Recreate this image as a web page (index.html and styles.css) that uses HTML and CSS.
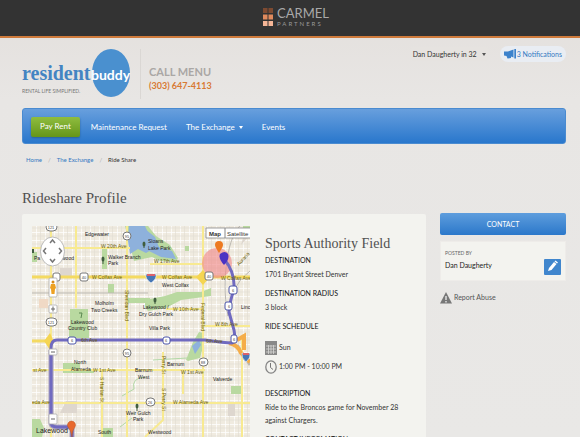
FILE: index.html
```html
<!DOCTYPE html>
<html lang="en">
<head>
<meta charset="utf-8">
<title>Rideshare Profile - residentbuddy</title>
<link rel="stylesheet" href="styles.css">
</head>
<body>
<div class="topbar">
  <svg class="tiles" viewBox="0 0 10 18" aria-hidden="true">
    <path fill="#7d4a31" d="M0 0h4.500v5H0zM5.500 0H10v5H5.500z"/>
    <path fill="#e08a5d" d="M0 6.500h4.500v5H0zM5.500 6.500H10v5H5.500z"/>
    <path fill="#f5b697" d="M0 13h4.500v5H0zM5.500 13H10v5H5.500z"/>
  </svg>
  <div class="partner"><span class="partner-name">CARMEL</span><span class="partner-sub">PARTNERS</span></div>
</div>
<div class="page">
  <header class="header">
    <a class="logo" href="#" aria-label="residentbuddy">
      <svg viewBox="0 0 110 50">
        <ellipse cx="89" cy="24" rx="19" ry="24" fill="#4a90cf"/>
        <text class="logo-resident" x="0" y="31">resident</text>
        <text class="logo-buddy" x="69" y="31">buddy</text>
        <text class="logo-tag" x="0" y="44">RENTAL LIFE SIMPLIFIED.</text>
      </svg>
    </a>
    <div class="call"><span class="call-title">CALL MENU</span><span class="call-number">(303) 647-4113</span></div>
    <div class="account">
      <button class="user" type="button">Dan Daugherty in 32 <span class="caret"></span></button>
      <a class="notes" href="#">
        <svg viewBox="0 0 12 10" aria-hidden="true"><path fill="#3c82cc" d="M0 2.500 4 2.500 9.500.5v8L7 7.500V9L3.500 9.500 2.500 7 0 6.500zM10.300 0H12v9.500h-1.700z"/></svg>3 Notifications</a>
    </div>
  </header>
  <nav class="nav">
    <a class="pay" href="#">Pay Rent</a>
    <a href="#">Maintenance Request</a>
    <a href="#">The Exchange <span class="caret light"></span></a>
    <a href="#">Events</a>
  </nav>
  <div class="crumbs"><a href="#">Home</a><i>/</i><a href="#">The Exchange</a><i>/</i><span>Ride Share</span></div>
  <h1>Rideshare Profile</h1>
  <div class="columns">
    <main class="card">
      <svg class="map" viewBox="32 226 218 220" preserveAspectRatio="xMidYMin slice" role="img" aria-label="Route map">
        <defs>
          <pattern id="blocks" width="9" height="8" patternUnits="userSpaceOnUse">
            <rect width="9" height="8" fill="#f0ebe0"/><path d="M0 0H9M0 0V8" stroke="#fff" stroke-width="1.500"/><path d="M4.500 0V8M0 4H9" stroke="#e1dcd2" stroke-width=".6"/>
          </pattern>
        </defs>
        <path fill="url(#blocks)" d="M32 226h218v220H32z"/>
        <g fill="#b9d9a0">
          <path d="M125 226h23l8 10 14 9 8 13-2 4-16-1-8-4-18 4z"/>
          <path d="M70 309h18v17H70zM69 326h20v12H69zM108 284h6v9h-6zM63 363h17v7h14v3H63zM102 249h5v20h-5zM185 246h4v5h-4zM128 298h22v5h-22z"/>
          <path d="M145 300l20-4 12-4h24l10-4v8l-30 4-15 8-18 3-3-4z"/>
          <path d="M186 360l7-18 6-10 5 1-1 14-3 11-12 3zM231 386h10v8h-10zM32 419h8l4 9-2 9H32zM103 428h10v10h-10zM243 226h7v12l-7-4zM32 252h5v10h-5z"/>
        </g>
        <g fill="#8eb1dc">
          <path d="M129 226h16l6 13 2 10-7 4-8-4-8 5-2-13z"/>
          <path d="M145 229l10 8 4 10 13 4 4 8-15-2-12-6-6-9z"/><path d="M192 346l7-6 2 5-6 9z"/>
        </g>
        <path fill="#ded7cf" d="M60 268h12v9H60zM228 402h7v14h-7zM66 401h11v12H60zM245 231l-4 14 9-10z"/>
        <path fill="#f0d9c5" d="M39 299h9v9h-9z"/>
        <g fill="none" stroke="#bcb9b3">
          <path d="M32 293H148M228 316C222 290 225 240 240 226M250 271Q230 285 228 316"/>
          <path d="M237 345l13 20" stroke-width="3"/>
        </g>
        <g fill="none" stroke="#b2d8a6"><path d="M145 377q-14 1-11 12l-12 7M153 360l34-2M120 427l12-9"/></g>
        <g fill="none" stroke="#f8ea91" stroke-width="2">
          <path d="M32 248H130M32 277H250M150 264H202M32 370H205M32 403H250M76 226V308M127 226V445M203 226V445M51 226V445M102 370V445M163 352V420l-18 17M166 309H203M202 326H250M242 338v107M183 370v24"/>
        </g>
        <path d="M32 277H250M32 341H50" stroke="#f4da61" stroke-width="3"/>
        <path d="M44 341l6-8 4 9-4 8zM196 277l7-7 7 7-7 8z" fill="#f5d552"/>
        <path d="M229 343q9 2 12 10l9 9M237 340l7-4v14" fill="none" stroke="#f5ad49" stroke-width="4"/>
        <circle cx="217" cy="263" r="15" fill="#f08c8c" fill-opacity=".65"/>
        <path d="M51 350V424Q52 427 57 427H72V445" fill="none" stroke="#a9a2bf" stroke-width="5"/>
        <path d="M72 445V427H57Q51 427 51 422V348Q51 340 57 340H205Q225 343 232 343 236 341 234 330L229 312Q230 300 234 290C235 276 231 267 224 259" fill="none" stroke="#706ac0" stroke-width="3"/>
        <g class="label">
          <text x="85" y="236">Edgewater</text><text x="148" y="243">Sloans</text><text x="148" y="250">Lake Park</text>
          <text x="108" y="259">Walker Branch</text><text x="108" y="265">Park</text><text x="34" y="260">Pa</text><text x="62" y="260">wood</text>
          <text x="162" y="287">West Colfax</text><text x="95" y="305">Molholm</text><text x="91" y="312">Two Creeks</text>
          <text x="71" y="324">Lakewood</text><text x="68" y="330">Country Club</text><text x="143" y="309">Lakewood /</text><text x="139" y="316">Dry Gulch Park</text>
          <text x="149" y="330">Villa Park</text><text x="241" y="309">Linc</text><text x="74" y="364">North</text><text x="71" y="371">Alameda</text>
          <text x="135" y="372">Barnum</text><text x="138" y="379">West</text><text x="167" y="366">Barnum</text><text x="213" y="381">Valverde</text>
          <text x="126" y="415">Weir Gulch</text><text x="133" y="421">Park</text><text x="98" y="434">South</text><text x="148" y="434">Westwood</text>
          <text class="town" x="36" y="433">Lakewood</text>
        </g>
        <g class="street">
          <text x="101" y="248">W 20th Ave</text><text x="154" y="263">W 17th Ave</text><text x="92" y="279">W Colfax Ave</text><text x="162" y="279">W Colfax Ave</text><text x="221" y="280">W Colfax Ave</text>
          <text x="173" y="311">W 10th Ave</text><text x="215" y="326">W 8th Ave</text><text x="81" y="342">6th Ave</text><text x="206" y="343">6th Ave</text><text x="33" y="372">st Ave</text><text x="93" y="372">W 1st Ave</text>
          <text x="181" y="374">W 1st Ave</text><text x="32" y="404">eda Ave</text><text x="173" y="404">W Alameda Ave</text>
          <text transform="translate(125 290) rotate(90)">Sheridan Blvd</text><text transform="translate(201 303) rotate(90)">Federal Blvd</text>
          <text transform="translate(100 377) rotate(90)">S Harlan St</text><text transform="translate(162 356) rotate(90)">Perry St</text><text transform="translate(162 388) rotate(90)">S Perry St</text>
          <text transform="translate(239 266) rotate(-48)">Auraria</text>
        </g>
        <g class="badge">
          <rect x="46" y="223" width="11" height="8" rx="4"/><rect x="123" y="232" width="8" height="8" rx="4"/><rect x="53" y="273" width="7" height="8" rx="2"/><rect x="80" y="273" width="8" height="8" rx="2"/>
          <rect x="205" y="272" width="8" height="8" rx="2"/><rect x="46" y="318" width="11" height="8" rx="4"/><rect x="123" y="349" width="8" height="8" rx="4"/><rect x="199" y="358" width="9" height="8" rx="4"/><rect x="146" y="398" width="9" height="8" rx="4"/>
          <text x="51" y="229">121</text><text x="127" y="238">95</text><text x="84" y="279">40</text><text x="209" y="278">40</text><text x="51" y="324">121</text><text x="127" y="355">95</text><text x="203" y="364">88</text><text x="150" y="404">26</text>
        </g>
        <g class="badge route">
          <rect x="68" y="337" width="8" height="7" rx="2"/><rect x="163" y="337" width="7" height="7" rx="2"/><rect x="229" y="286" width="8" height="8" rx="2"/><rect x="225" y="302" width="7" height="8" rx="2"/><rect x="231" y="335" width="6" height="8" rx="2"/>
          <text x="72" y="342">6</text><text x="166" y="342">6</text><text x="233" y="292">6</text><text x="229" y="308">6</text><text x="234" y="341">6</text>
        </g>
        <g fill="#4677b5" stroke="#fff" stroke-width=".6"><path d="M146 274q5 1 10 0 1 5-5 9-6-4-5-9zM242 353q4 1 8 0 1 5-4 9-5-4-4-9z"/></g>
        <path d="M147 275h8M243 354h6" stroke="#dc626a" stroke-width="2"/>
        <g fill="#405d3f"><ellipse cx="103" cy="259" rx="1.500" ry="2.500"/><ellipse cx="144" cy="244" rx="1.500" ry="2.500"/><ellipse cx="155" cy="300" rx="1.500" ry="2.500"/><ellipse cx="137" cy="406" rx="1.500" ry="2.500"/><path d="M102.500 260h1v4h-1zM154.500 301h1v3h-1zM136.500 407h1v4h-1zM143.500 246h1v2h-1zM32 249h2v4h-2z"/></g>
        <path d="M79 313h3l-1 5" fill="none" stroke="#5a8750"/>
        <path d="M224 265q-6-7-4-11 5-4 8 0 2 5-4 11z" fill="#4b32c3"/>
        <path d="M219 253q-4-6-4-8a4 4 0 0 1 8 0q0 2-4 8z" fill="#ed7a22"/>
        <path d="M72 437q-1-7-4-10a4 4 0 1 1 7 0q-3 3-3 10z" fill="#e8692c" stroke="#b9501c" stroke-width=".5"/>
        <g fill="#fff" stroke="#aaa" stroke-width=".8">
          <ellipse cx="52.500" cy="251.500" rx="12" ry="14.500"/><rect x="49" y="278" width="8" height="19" rx="1"/>
          <rect x="49" y="305" width="8" height="8" rx="1"/><rect x="49" y="349" width="8" height="6" rx="1"/><rect x="49" y="414" width="8" height="10" rx="1"/>
        </g>
        <path d="M50 243l2.500-3 2.500 3M50 259l2.500 3 2.500-3M46 248l-2.500 3 2.500 3M59 248l2.500 3-2.500 3" fill="none" stroke="#777" stroke-width="1.500"/>
        <path d="M53 306.500v5M51 309h4M51 352h4M51 419h4" stroke="#666"/>
        <path d="M51 284h4l1 4-1 1-.5 5h-3l-.5-5-1-1z" fill="#eda123"/><circle cx="53" cy="282" r="1.500" fill="#d98c18"/>
        <path d="M206 228h45v10h-45z" fill="#fff" stroke="#888" stroke-width=".8"/><path d="M225 228v10" stroke="#888"/>
        <text class="maptype" x="209" y="236" font-weight="700">Map</text><text class="maptype" x="227" y="236">Satellite</text>
      </svg>
      <section class="details">
        <h2>Sports Authority Field</h2>
        <h3>DESTINATION</h3>
        <p>1701 Bryant Street Denver</p>
        <h3>DESTINATION RADIUS</h3>
        <p>3 block</p>
        <h3>RIDE SCHEDULE</h3>
        <div class="when first">
          <svg viewBox="0 0 12 14" aria-hidden="true"><path fill="#898988" d="M0 0h12v14H0z"/><path d="M1 5h10M1 8h10M1 11h10M3.500 4v9M6 4v9M8.500 4v9" stroke="#d8d8d5" stroke-width=".8"/></svg><span>Sun</span>
        </div>
        <div class="when last">
          <svg viewBox="0 0 12 14" aria-hidden="true"><ellipse cx="6" cy="7" rx="5.200" ry="6.200" fill="none" stroke="#858585" stroke-width="1.300"/><path d="M5.500 3v4.500L8 9.500" fill="none" stroke="#777"/></svg><span>1:00 PM - 10:00 PM</span>
        </div>
        <h3>DESCRIPTION</h3>
        <p>Ride to the Broncos game for November 28 against Chargers.</p>
        <h3>CONTACT INFORMATION</h3>
      </section>
    </main>
    <aside class="side">
      <button class="contact" type="button">CONTACT</button>
      <div class="poster">
        <div><span class="by">POSTED BY</span><span class="name">Dan Daugherty</span></div>
        <button class="edit" type="button" aria-label="Edit"><svg viewBox="0 0 16 16"><path fill="#fff" d="M4 12l1-3 5-6 2.500 2-5 6zM10.500 2.500l1-1L14 3.500l-1 1z"/></svg></button>
      </div>
      <a class="abuse" href="#"><svg viewBox="0 0 12 12" aria-hidden="true"><path fill="#777" d="M6 0l6 11.500H0z"/><path d="M6 4v4M6 9v1.500" stroke="#eee" stroke-width="1.300"/></svg>Report Abuse</a>
    </aside>
  </div>
</div>
</body>
</html>
```
FILE: styles.css
```css
* { box-sizing: border-box; }
body {
  margin: 0;
  height: 100vh;
  overflow: hidden;
  background: linear-gradient(#e3dfdc, #e8e6e4 100px, #e9e8e6);
  color: #333;
  font: 7px/13px Lato, "Open Sans", sans-serif;
}
a { color: #3478c2; text-decoration: none; }
button { font: inherit; border: 0; padding: 0; }
h1, h2, h3, p { margin: 0; font-weight: 400; }

.topbar {
  display: flex;
  align-items: center;
  justify-content: center;
  gap: 4px;
  height: 38px;
  padding: 0 0 2px 12px;
  background: #333;
  border-bottom: 2px solid #cf7b3c;
}
.tiles { width: 10px; height: 18px; }
.partner { display: flex; flex-direction: column; color: #a9a9a9; }
.partner-name { font-size: 13px; line-height: 14px; }
.partner-sub { font-size: 6px; line-height: 8px; letter-spacing: 2px; color: #999; }

.page { padding: 0 14px 0 22px; }
.header { display: flex; align-items: flex-start; height: 70px; }
.logo { margin-top: 11px; padding-right: 8px; border-right: 1px solid #dad7d4; }
.logo svg { display: block; width: 110px; height: 50px; }
.logo-resident { font: 700 20px "Liberation Serif", serif; fill: #4384c2; }
.logo-buddy { font: 700 14px Lato, sans-serif; fill: #fff; }
.logo-tag { font: 5px Lato, sans-serif; fill: #777; }
.call { display: flex; flex-direction: column; margin: 26px 0 0 8px; }
.call-title { font-size: 11px; line-height: 16px; font-weight: 700; color: #aaa7a5; }
.call-number { font-size: 9px; line-height: 12px; font-weight: 700; color: #d87932; }
.account { display: flex; align-items: center; gap: 12px; margin: 8px 0 0 auto; }
.user {
  display: flex;
  align-items: center;
  gap: 5px;
  height: 14px;
  padding: 0 2px;
  background: #e6e3e0;
  border-radius: 2px;
  color: #333;
}
.caret { display: inline-block; border: 2px solid transparent; border-top: 3px solid #555; border-bottom: 0; }
.caret.light { border-top-color: #fff; margin-left: 2px; vertical-align: middle; }
.notes { display: flex; align-items: center; gap: 1px; height: 16px; padding: 0 4px; border-radius: 8px; background: #e9edf3; }
.notes svg { width: 12px; height: 10px; }

.nav {
  display: flex;
  align-items: center;
  gap: 19px;
  height: 36px;
  padding: 2px 8px 0;
  border: 1px solid #4a8bd0;
  border-radius: 3px;
  background: linear-gradient(#689fdd, #2977cc);
  font-size: 8px;
}
.nav a { color: #fff; }
.nav .pay { margin-right: -8px; padding: 3px 9px 4px; border-radius: 2px; background: linear-gradient(#8fbd3f, #659519); box-shadow: 0 1px 2px #2b619a; }

.crumbs { display: flex; gap: 6px; padding: 9px 4px; font-size: 6px; }
.crumbs i { color: #aaa; font-style: normal; }
h1 { padding: 13px 0 4px; font: 15px/21px "Liberation Serif", serif; color: #505050; }

.columns { display: grid; grid-template-columns: minmax(0, 404fr) minmax(0, 126fr); gap: 14px; align-items: start; }
.card { display: grid; grid-template-columns: minmax(0, 218fr) minmax(0, 151fr); gap: 15px; padding: 12px 10px; margin-top: 1px; background: #f3f3ef; border-radius: 2px; }
.map { display: block; width: 100%; }
.label { font: 5px "Liberation Sans", sans-serif; fill: #222; }
.label .town { font: 7px "Liberation Sans", sans-serif; }
.street { font: 5px "Liberation Sans", sans-serif; fill: #6b5e0c; }
.badge { font: 4px "Liberation Sans", sans-serif; text-anchor: middle; stroke: #777; fill: #fff; stroke-width: 1px; }
.badge text { stroke: none; fill: #444; }
.route { stroke: #4c55a8; }
.maptype { font-family: "Liberation Sans", sans-serif; font-size: 6px; fill: #333; }

.details { padding-top: 7px; }
h2 { font: 14px/21px "Liberation Serif", serif; color: #505050; }
h3 { font-size: 7px; line-height: 13px; color: #111; }
.details p { margin: 1px 0 6px; }
.when { display: flex; align-items: center; gap: 2px; height: 19px; }
.when svg { width: 12px; height: 14px; }
.first { margin-top: 5px; }
.last { margin-bottom: 11px; }

.side { display: flex; flex-direction: column; }
.contact { height: 22px; border-radius: 2px; background: linear-gradient(#5e9ddd, #2b78ca); color: #fff; }
.poster { display: flex; justify-content: space-between; margin: 6px 0 10px; padding: 5px 4px; border: 1px solid #eeece9; background: #f3f3ef; }
.poster div { display: flex; flex-direction: column; padding-bottom: 4px; }
.by { font-size: 5px; line-height: 12px; color: #666; }
.name { line-height: 12px; color: #222; }
.edit { align-self: flex-end; width: 17px; height: 16px; border-radius: 1px; background: #4086cd; }
.edit svg { display: block; width: 16px; height: 16px; }
.abuse { display: flex; align-items: center; gap: 2px; color: #555; }
.abuse svg { width: 12px; height: 12px; }
```
